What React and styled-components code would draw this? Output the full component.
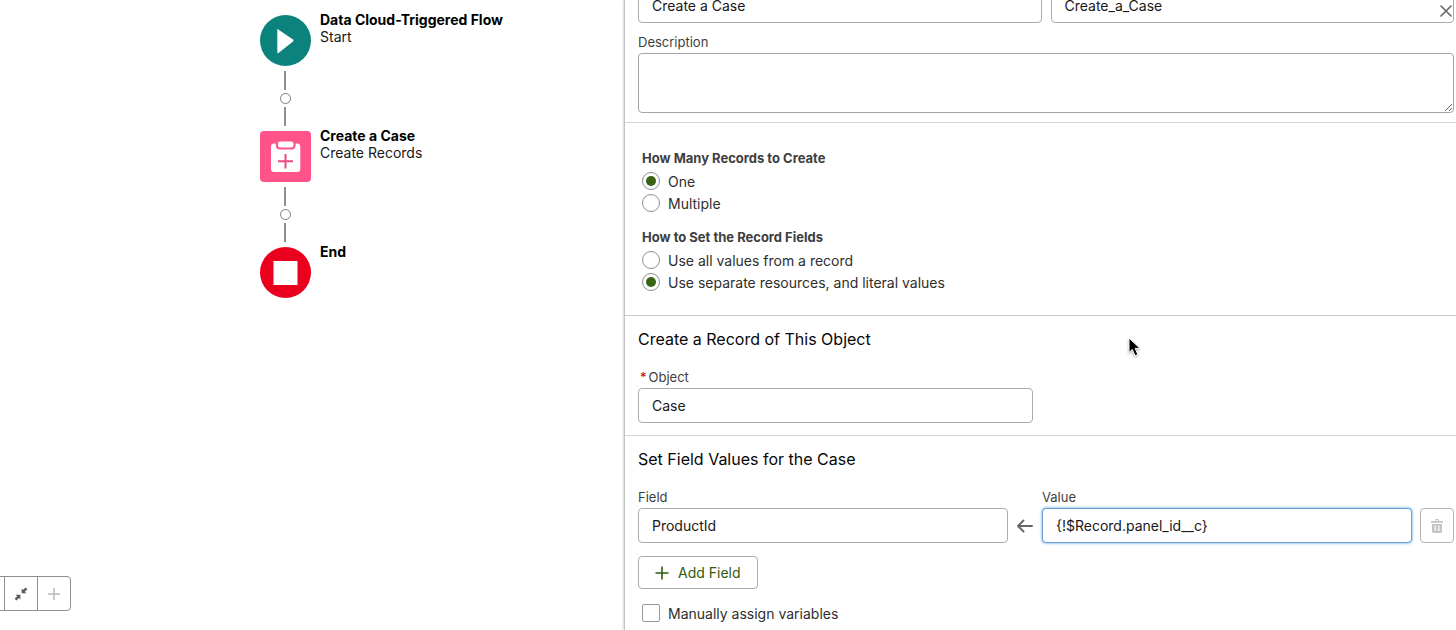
import React, { useState } from 'react'
import styled, { createGlobalStyle } from 'styled-components'

const steps = [
  { kind: 'start', title: 'Data Cloud-Triggered Flow', type: 'Start' },
  { kind: 'create', title: 'Create a Case', type: 'Create Records' },
  { kind: 'end', title: 'End' },
]

const stepColors = {
  start: '#0b827c',
  create: '#ff538a',
  end: '#ea001e',
}

function StepIcon({ kind }) {
  return (
    <svg width="51" height="51" viewBox="0 0 51 51" aria-hidden="true">
      {kind === 'start' && (
        <path d="M17.5 14 L33 24.5 Q34 25.5 33 26.5 L18.5 38 Q17.3 38.6 17.3 37 V14.2 Z" fill="#fff" />
      )}
      {kind === 'create' && (
        <>
          <path
            d="M14 12.5 H15.5 C16.2 16.5 17.5 18 20 18 H31 C33.7 18 35 16.5 35.6 12.5 H37 Q40.3 12.5 40.3 15.8 V38 Q40.3 41 37.3 41 H14 Q11 41 11 38 V15.8 Q11 12.5 14 12.5 Z"
            fill="#fff"
          />
          <rect x="17" y="9.5" width="17.5" height="8" rx="3" fill="#fff" stroke="#ff538a" strokeWidth="2" />
          <path d="M25.5 23 V37.5 M18 30.3 H33" stroke="#ef4a80" strokeWidth="2" fill="none" />
        </>
      )}
      {kind === 'end' && <rect x="13.5" y="14" width="24" height="24" fill="#fff" />}
    </svg>
  )
}

const TextField = ({ id, label, required, value, focused }) => {
  const [text, setText] = useState(value)
  return (
    <FieldBox>
      <Label htmlFor={id}>
        {required && <Required>*</Required>}
        {label}
      </Label>
      <Input id={id} $focused={focused} value={text} onChange={(e) => setText(e.target.value)} />
    </FieldBox>
  )
}

const RadioGroup = ({ name, legend, options, selected }) => {
  const [current, setCurrent] = useState(selected)
  return (
    <Group>
      <Legend>{legend}</Legend>
      {options.map((option) => (
        <Option key={option}>
          <Radio type="radio" name={name} checked={current === option} onChange={() => setCurrent(option)} />
          {option}
        </Option>
      ))}
    </Group>
  )
}

const App = () => {
  const [manual, setManual] = useState(false)

  return (
    <Page>
      <GlobalStyle />
      <Canvas>
        <Flow>
          {steps.map((step, index) => (
            <React.Fragment key={step.title}>
              {index > 0 && (
                <Connector>
                  <Line />
                  <AddStep type="button" aria-label="Add element" />
                  <Line />
                </Connector>
              )}
              <Step>
                <StepShape $kind={step.kind}>
                  <StepIcon kind={step.kind} />
                </StepShape>
                <StepText>
                  <strong>{step.title}</strong>
                  {step.type && <span>{step.type}</span>}
                </StepText>
              </Step>
            </React.Fragment>
          ))}
        </Flow>
        <ZoomBar>
          <ZoomButton type="button" aria-label="Zoom out" />
          <ZoomButton type="button" aria-label="Zoom to fit">
            <svg width="14" height="14" viewBox="0 0 14 14" fill="#5c5c5c">
              <path d="M7.6 1.6 L9 3 L11.6 0.4 L13.4 2.2 L10.8 4.8 L12.4 6.2 H7.6 Z" />
              <path d="M6.4 12.4 L5 11 L2.4 13.6 L0.6 11.8 L3.2 9.2 L1.6 7.8 H6.4 Z" />
            </svg>
          </ZoomButton>
          <ZoomButton type="button" aria-label="Zoom in">
            <svg width="14" height="14" viewBox="0 0 14 14" stroke="#b9b9b9" strokeWidth="1.5">
              <path d="M7 1 V13 M1 7 H13" />
            </svg>
          </ZoomButton>
        </ZoomBar>
      </Canvas>

      <Panel>
        <CloseButton type="button" aria-label="Close">
          <svg width="12" height="12" viewBox="0 0 12 12" stroke="#666" strokeWidth="1.6" strokeLinecap="round">
            <path d="M1 1 L11 11 M11 1 L1 11" />
          </svg>
        </CloseButton>

        <Section>
          <NameRow>
            <Input aria-label="Label" defaultValue="Create a Case" />
            <Input aria-label="API Name" defaultValue="Create_a_Case" />
          </NameRow>
          <FieldBox $gap="9px">
            <Label htmlFor="description">Description</Label>
            <TextArea id="description" />
          </FieldBox>
        </Section>

        <OptionsSection>
          <RadioGroup
            name="count"
            legend="How Many Records to Create"
            options={['One', 'Multiple']}
            selected="One"
          />
          <RadioGroup
            name="source"
            legend="How to Set the Record Fields"
            options={['Use all values from a record', 'Use separate resources, and literal values']}
            selected="Use separate resources, and literal values"
          />
        </OptionsSection>

        <Section>
          <Heading>Create a Record of This Object</Heading>
          <ObjectRow>
            <TextField id="object" label="Object" required value="Case" />
          </ObjectRow>
        </Section>

        <Section>
          <Heading>Set Field Values for the Case</Heading>
          <ValueRow>
            <TextField id="field" label="Field" value="ProductId" />
            <ArrowCell>
              <svg width="16" height="14" viewBox="0 0 16 14" fill="none" stroke="#666" strokeWidth="1.9" strokeLinecap="round" strokeLinejoin="round">
                <path d="M15 7 H1.2 M6.5 1.5 L1 7 L6.5 12.5" />
              </svg>
            </ArrowCell>
            <TextField id="value" label="Value" value="{!$Record.panel_id__c}" focused />
            <DeleteButton type="button" aria-label="Delete" disabled>
              <svg width="12" height="14" viewBox="0 0 12 14" fill="#c4c4c4">
                <path fillRule="evenodd" d="M4 2 V1.2 Q4 0 5.2 0 H6.8 Q8 0 8 1.2 V2 H11.4 Q12 2 12 2.6 V3.8 H0 V2.6 Q0 2 0.6 2 Z M5 2 H7 V1 H5 Z" />
                <path fillRule="evenodd" d="M1 5 H11 V12.6 Q11 14 9.6 14 H2.4 Q1 14 1 12.6 Z M3.6 6.6 V12 H4.8 V6.6 Z M7.2 6.6 V12 H8.4 V6.6 Z" />
              </svg>
            </DeleteButton>
          </ValueRow>
          <AddButton type="button">
            <svg width="14" height="14" viewBox="0 0 14 14" stroke="#2f5a0f" strokeWidth="1.6">
              <path d="M7 0.5 V13.5 M0.5 7 H13.5" />
            </svg>
            Add Field
          </AddButton>
          <ManualOption>
            <Checkbox type="checkbox" checked={manual} onChange={() => setManual(!manual)} />
            Manually assign variables
          </ManualOption>
        </Section>
      </Panel>

      <Pointer width="14" height="20" viewBox="0 0 14 20" aria-hidden="true">
        <path
          d="M1 1 V15.5 L4.3 12.5 L7 18.8 L9.9 17.5 L7.2 11.4 H12 Z"
          fill="#000"
          stroke="#fff"
          strokeWidth="1"
        />
      </Pointer>
    </Page>
  )
}

export default App

const GlobalStyle = createGlobalStyle`
  * {
    box-sizing: border-box;
  }

  body {
    margin: 0;
    background: #fff;
    font-family: Inter, 'Liberation Sans', sans-serif;
    font-size: 14px;
    color: #181818;
  }

  button, input, textarea {
    font: inherit;
    color: inherit;
  }

  svg {
    display: block;
    flex: none;
  }
`
const Page = styled.div`
  position: relative;
  display: grid;
  grid-template-columns: 3fr 4fr;
  height: 100vh;
  overflow: hidden;
`
const Canvas = styled.main`
  position: relative;
  overflow: hidden;
`
const Flow = styled.div`
  padding: 15px 0 0 260px;
`
const Step = styled.div`
  display: flex;
  gap: 9px;
`
const StepShape = styled.div`
  width: 51px;
  height: 51px;
  flex: none;
  background: ${({ $kind }) => stepColors[$kind]};
  border-radius: ${({ $kind }) => ($kind === 'create' ? '4px' : '50%')};
`
const StepText = styled.div`
  display: flex;
  flex-direction: column;
  margin-top: -4px;
  line-height: 17px;
  color: #181818;

  strong {
    font-weight: 700;
    color: #000;
  }
`
const Connector = styled.div`
  display: flex;
  flex-direction: column;
  align-items: center;
  gap: 3px;
  width: 50px;
  padding: 5px 0;
`
const Line = styled.div`
  width: 2px;
  height: 19px;
  background: #8e8e8e;
`
const AddStep = styled.button`
  width: 11px;
  height: 11px;
  padding: 0;
  border: 1px solid #7d7d7d;
  border-radius: 50%;
  background: #fff;
`
const ZoomBar = styled.div`
  position: absolute;
  left: -30px;
  bottom: 19px;
  display: flex;
  border: 1px solid #8f8f8f;
  border-radius: 4px;
  background: #fff;
`
const ZoomButton = styled.button`
  display: flex;
  align-items: center;
  justify-content: center;
  width: 33px;
  height: 33px;
  padding: 0;
  border: 0;
  background: none;

  & + & {
    border-left: 1px solid #8f8f8f;
  }
`
const Panel = styled.aside`
  position: relative;
  border-left: 1px solid #c4c4c4;
  box-shadow: -1px 0 2px rgba(0, 0, 0, 0.16);
  overflow: hidden;
`
const CloseButton = styled.button`
  position: absolute;
  top: 5px;
  right: 4px;
  padding: 0;
  border: 0;
  background: none;
`
const Section = styled.section`
  padding: 11px 2px 12px 13px;
  border-bottom: 1px solid #d4d4d4;

  &:first-of-type {
    padding-top: 0;
    padding-bottom: 9px;
  }

  &:last-of-type {
    border-bottom: 0;
  }
`
const OptionsSection = styled.section`
  display: flex;
  flex-direction: column;
  gap: 14px;
  padding: 26px 17px 22px;
  border-bottom: 1px solid #c9c9c9;
`
/* the panel is scrolled a little, so the first row is cut at the top */
const NameRow = styled.div`
  display: flex;
  gap: 9px;
  margin-top: -12px;
`
const FieldBox = styled.div`
  display: flex;
  flex-direction: column;
  flex: 1;
  min-width: 0;
  margin-top: ${({ $gap }) => $gap || 0};
`
const Label = styled.label`
  margin-bottom: 1px;
  font-size: 13px;
  line-height: 20px;
  color: #3e3e3e;
`
const Required = styled.abbr`
  margin: 0 2px;
  color: #ba0517;
`
const Input = styled.input`
  width: 100%;
  min-width: 0;
  height: 35px;
  padding: 0 13px;
  border: 1px solid ${({ $focused }) => ($focused ? '#6a9fd4' : '#ababab')};
  border-radius: 4px;
  background: #fff;
  outline: none;
  box-shadow: ${({ $focused }) => ($focused ? '0 0 3px #4a9be8' : 'none')};
`
const TextArea = styled.textarea`
  height: 60px;
  padding: 8px 13px;
  border: 1px solid #a5a5a5;
  border-radius: 4px;
  background: #fff;
  outline: none;
  resize: vertical;
`
const Group = styled.fieldset`
  margin: 0;
  padding: 0;
  border: 0;
`
const Legend = styled.legend`
  margin-bottom: 3px;
  padding: 0;
  font-size: 13px;
  line-height: 18px;
  font-weight: 700;
  color: #3e3e3e;
`
const Option = styled.label`
  display: flex;
  align-items: center;
  gap: 8px;
  height: 22px;
  color: #2e2e2e;
`
const Radio = styled.input`
  appearance: none;
  display: grid;
  place-items: center;
  width: 18px;
  height: 18px;
  margin: 0;
  border: 1px solid #8f8f8f;
  border-radius: 50%;

  &:checked::before {
    content: "";
    width: 10px;
    height: 10px;
    border-radius: 50%;
    background: #396512;
  }
`
const Heading = styled.h2`
  margin: 0 0 16px;
  font-size: 16px;
  line-height: 24px;
  font-weight: 400;
  color: #080707;
`
const ObjectRow = styled.div`
  display: flex;
  width: calc(50% - 13px);
`
const ValueRow = styled.div`
  display: flex;
  align-items: flex-end;
`
const ArrowCell = styled.div`
  display: flex;
  align-items: center;
  justify-content: center;
  width: 34px;
  height: 35px;
  flex: none;
`
const DeleteButton = styled.button`
  display: flex;
  align-items: center;
  justify-content: center;
  width: 34px;
  height: 35px;
  flex: none;
  margin-left: 8px;
  padding: 0;
  border: 1px solid #b5b5b5;
  border-radius: 4px;
  background: #fff;
`
const AddButton = styled.button`
  display: flex;
  align-items: center;
  gap: 9px;
  height: 33px;
  margin: 13px 0;
  padding: 0 16px;
  border: 1px solid #ababab;
  border-radius: 4px;
  background: #fff;
  color: #2f5a0f;
`
const ManualOption = styled(Option)`
  margin-left: 4px;
`
const Checkbox = styled.input`
  appearance: none;
  width: 18px;
  height: 18px;
  margin: 0;
  border: 1px solid #9a9a9a;
  border-radius: 2px;

  &:checked {
    background: #396512;
  }
`
const Pointer = styled.svg`
  position: absolute;
  top: 337px;
  left: 1128px;
  filter: drop-shadow(0 1px 1px rgba(0, 0, 0, 0.35));
  pointer-events: none;
`
